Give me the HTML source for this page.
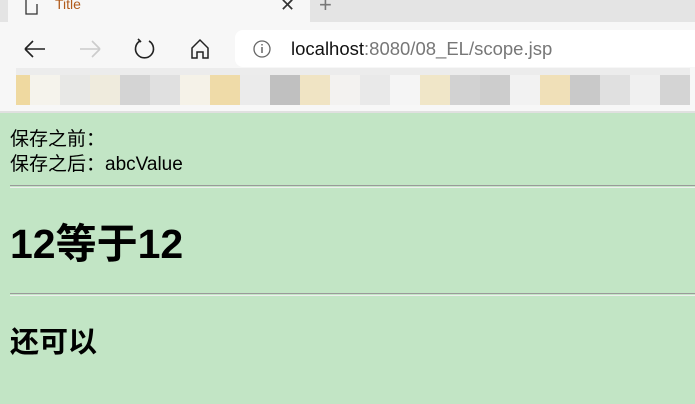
<!DOCTYPE html>
<html><head><meta charset="utf-8"><style>
*{margin:0;padding:0;box-sizing:border-box}
body{width:695px;height:404px;overflow:hidden;background:#c2e5c5;font-family:"Liberation Sans","Noto Sans CJK SC",sans-serif;position:relative}
.abs{position:absolute}
.tabs{left:0;top:0;width:695px;height:22px;background:#e4e4e4}
.tab{left:8px;top:-8px;width:302px;height:32px;background:#f7f7f7;border-radius:8px 8px 0 0}
.bar{left:0;top:22px;width:695px;height:90px;background:#f7f7f7}
.addr{left:235px;top:30px;width:520px;height:37px;background:#fff;border-radius:8px}
.m{top:68px;height:37px}
.m div{position:absolute;top:0;height:7px}
.m i{position:absolute;top:7px;height:30px;display:block}
.txt{font-size:19px;color:#000;left:10px}
hr{position:absolute;left:10px;width:690px;border:0;border-top:1px solid #9a9a9a;border-bottom:1px solid #eee;height:3px}
</style></head><body>
<div class="abs tabs"></div>
<div class="abs tab"></div>
<svg class="abs" style="left:24px;top:0" width="16" height="16"><path d="M2 0V14H13V4" fill="none" stroke="#333" stroke-width="1.3"/></svg>
<div class="abs" style="left:55px;top:-4px;font-size:14px;color:#b05a1a">Title</div>
<div class="abs" style="left:280px;top:-5px;font-size:18px;color:#333">✕</div>
<div class="abs" style="left:319px;top:-8px;font-size:22px;color:#777">+</div>
<div class="abs bar"></div>
<div class="abs addr"></div>
<svg class="abs" style="left:0;top:36px" width="230" height="26">
<path d="M25 13H45M25 13L33 5M25 13L33 21" fill="none" stroke="#222" stroke-width="1.6"/>
<path d="M80 13H100M100 13L92 5M100 13L92 21" fill="none" stroke="#ccc" stroke-width="1.6"/>
<path d="M140 5A9 9 0 1 0 149 5M138 3L141 6" fill="none" stroke="#222" stroke-width="1.6"/>
<path d="M192 12L200 4L208 12V22H203V16H197V22H192Z" fill="none" stroke="#222" stroke-width="1.5"/>
</svg>
<svg class="abs" style="left:252px;top:39px" width="20" height="20"><circle cx="10" cy="10" r="8" fill="none" stroke="#666" stroke-width="1.3"/><path d="M10 8V14M10 5V6.5" stroke="#666" stroke-width="1.5"/></svg>
<div class="abs" style="left:291px;top:38px;font-size:18.5px;color:#111">localhost<span style="color:#777">:8080/08_EL/scope.jsp</span></div>
<div class="abs m" style="left:0;width:695px">
<div style="left:16px;width:674px;background:#ececec"></div>
<i style="left:16px;width:14px;background:#efd9a0"></i><i style="left:30px;width:30px;background:#f5f3ec"></i><i style="left:60px;width:30px;background:#e8e8e6"></i><i style="left:90px;width:30px;background:#efebdd"></i><i style="left:120px;width:30px;background:#d4d4d4"></i><i style="left:150px;width:30px;background:#e0e0e0"></i><i style="left:180px;width:30px;background:#f5f2e8"></i><i style="left:210px;width:30px;background:#efdba8"></i><i style="left:240px;width:30px;background:#ebebeb"></i><i style="left:270px;width:30px;background:#c0c0c0"></i><i style="left:300px;width:30px;background:#f0e4c4"></i><i style="left:330px;width:30px;background:#f3f2f0"></i><i style="left:360px;width:30px;background:#e9e9e9"></i><i style="left:390px;width:30px;background:#f5f5f5"></i><i style="left:420px;width:30px;background:#f0e6c8"></i><i style="left:450px;width:30px;background:#d2d2d2"></i><i style="left:480px;width:30px;background:#cdcdcd"></i><i style="left:510px;width:30px;background:#f2f2f2"></i><i style="left:540px;width:30px;background:#f0e0b8"></i><i style="left:570px;width:30px;background:#c9c9c9"></i><i style="left:600px;width:30px;background:#e0e0e0"></i><i style="left:630px;width:30px;background:#f0f0f0"></i><i style="left:660px;width:30px;background:#d4d4d4"></i>
</div>
<div class="abs" style="left:0;top:111px;width:695px;height:2px;background:#e0e0e0"></div>
<div class="abs txt" style="top:127px;line-height:25px">保存之前：<br>保存之后：abcValue</div>
<hr style="top:185px">
<div class="abs" style="left:10px;top:219px;font-size:41px;font-weight:bold;line-height:50px">12等于12</div>
<hr style="top:293px">
<div class="abs" style="left:10px;top:325px;font-size:29px;font-weight:bold;line-height:36px">还可以</div>
</body></html>
